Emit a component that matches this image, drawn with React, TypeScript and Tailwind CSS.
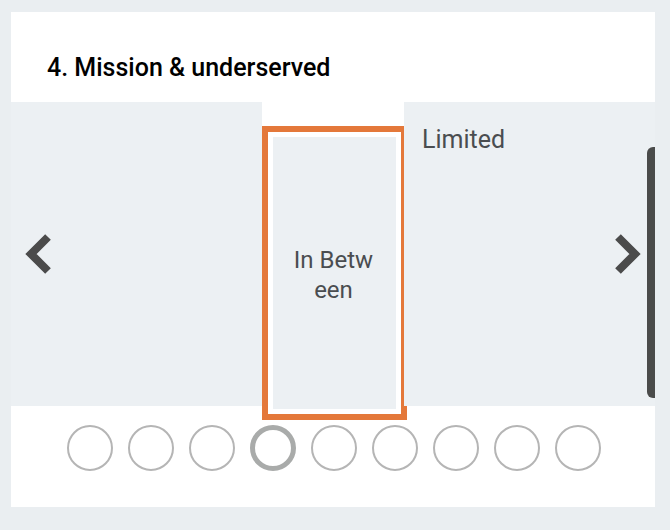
import React from "react";

function Chevron({ dir }: { dir: "left" | "right" }) {
  return (
    <svg width="28" height="42" viewBox="0 0 28 42" className="block">
      {dir === "left" ? (
        <polyline points="23,4 6,21 23,38" fill="none" stroke="#4b4b4b" strokeWidth="8" strokeLinecap="butt" strokeLinejoin="miter" />
      ) : (
        <polyline points="5,4 22,21 5,38" fill="none" stroke="#4b4b4b" strokeWidth="8" strokeLinecap="butt" strokeLinejoin="miter" />
      )}
    </svg>
  );
}

export default function App() {
  const dots = [0, 1, 2, 3, 4, 5, 6, 7, 8];
  return (
    <div
      className="w-[670px] h-[530px] bg-[#eaeef1] pl-[11px] pt-[12px]"
      style={{ fontFamily: "Roboto, 'Liberation Sans', sans-serif" }}
    >
      <div className="w-[644px] h-[495px] bg-white flex flex-col">
        <div className="h-[90px] shrink-0 pl-[36px] pt-[42px]">
          <h2 className="text-[25px] leading-[28px] font-medium text-black">4. Mission &amp; underserved</h2>
        </div>
        <div className="h-[304px] shrink-0 grid grid-cols-[251px_142px_251px] grid-rows-[304px] relative z-10">
          <div className="bg-[#ecf0f3] flex items-center pl-[14px]">
            <Chevron dir="left" />
          </div>
          <div className="bg-white h-[304px]">
            <div className="mt-[24px] w-[145px] h-[294px] border-[6px] border-[#e4783a] bg-white p-[5px]">
              <div className="w-full h-full bg-[#ecf0f3] flex items-center justify-center">
                <p className="text-[24px] leading-[30px] text-[#4a4d50] text-center pt-[3px] pr-[2px]">
                  In Betw
                  <br />
                  een
                </p>
              </div>
            </div>
          </div>
          <div className="bg-[#ecf0f3] relative flex">
            <div className="flex-1 pl-[18px] pt-[24px]">
              <p className="text-[25px] leading-[28px] text-[#4a4d50]">Limited</p>
            </div>
            <div className="flex items-center pr-[6px]">
              <Chevron dir="right" />
            </div>
            <div className="w-[8px] mt-[45px] mb-[8px] bg-[#4a4b4a] rounded-l-[6px]" />
          </div>
        </div>
        <div className="flex justify-center gap-[15px] pt-[19px] pl-[1px]">
          {dots.map((i) => (
            <div
              key={i}
              className={
                i === 3
                  ? "w-[46px] h-[46px] rounded-full border-[5px] border-[#a9abaa]"
                  : "w-[46px] h-[46px] rounded-full border-[2px] border-[#b5b5b5]"
              }
            />
          ))}
        </div>
      </div>
    </div>
  );
}
